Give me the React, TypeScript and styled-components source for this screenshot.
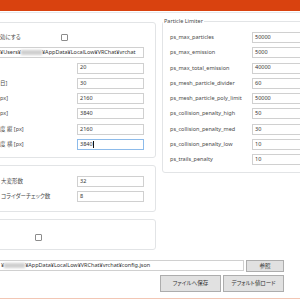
import React from "react";
import styled, { createGlobalStyle } from "styled-components";

const GlobalStyle = createGlobalStyle`
  html, body {
    margin: 0;
    padding: 0;
    background: #ffffff;
  }
  body {
    font-family: "Noto Sans", "Noto Sans CJK JP", sans-serif;
  }
`;

const Window = styled.div`
  width: 300px;
  height: 300px;
  overflow: hidden;
  display: flex;
  flex-direction: column;
  background: #ffffff;
  color: #444444;
  font-size: 5.5px;
  line-height: 1;
  font-feature-settings: "palt";
`;

const TitleBar = styled.div`
  height: 11px;
  flex-shrink: 0;
  background: #d9420f;
`;

const TabRule = styled.div`
  height: 1px;
  flex-shrink: 0;
  margin-top: 1px;
  background: #e6e9ec;
`;

const Main = styled.div`
  display: flex;
  align-items: flex-start;
`;

const LeftColumn = styled.div`
  display: flex;
  flex-direction: column;
  gap: 7px;
  width: 166px;
  flex-shrink: 0;
  margin-left: -10px;
  margin-top: 9px;
`;

const Panel = styled.div<{ $pad: string }>`
  display: flex;
  flex-direction: column;
  gap: 4.3px;
  box-sizing: border-box;
  padding: ${(p) => p.$pad};
  border: 1px solid #e2e4e6;
  border-radius: 3px;
`;

const Row = styled.div`
  display: flex;
  align-items: center;
  justify-content: space-between;
  height: 11px;
`;

const Label = styled.span`
  line-height: 11px;
  white-space: nowrap;
  color: #4a4a4a;
`;

const Field = styled.div<{ $focused?: boolean; $width?: number }>`
  box-sizing: border-box;
  display: flex;
  align-items: center;
  flex-shrink: 0;
  width: ${(p) => (p.$width ? `${p.$width}px` : "auto")};
  height: 11px;
  padding: 0 2px;
  background: #ffffff;
  border: 1px solid ${(p) => (p.$focused ? "#8dbbea" : "#d0d0d0")};
  color: #333333;
  white-space: nowrap;
  overflow: hidden;
`;

const PathField = styled(Field)`
  flex: 1;
  margin-left: -9px;
  padding-left: 8px;
`;

const Caret = styled.span`
  display: inline-block;
  width: 1px;
  height: 7px;
  margin-left: 0.5px;
  background: #111111;
`;

const Blur = styled.span`
  display: inline-block;
  width: 21px;
  height: 5px;
  background: #cfcfcf;
  filter: blur(1px);
`;

const CheckBox = styled.span<{ $offset: number }>`
  display: inline-block;
  box-sizing: border-box;
  width: 7px;
  height: 7px;
  margin-left: ${(p) => p.$offset}px;
  border: 1px solid #8c8c8c;
  border-radius: 1px;
  background: #ffffff;
`;

const CheckRow = styled.div`
  display: flex;
  align-items: center;
  height: 11px;
`;

const LimiterPanel = styled.div`
  position: relative;
  box-sizing: border-box;
  width: 160px;
  flex-shrink: 0;
  margin-left: 6px;
  margin-top: 8px;
  padding: 10px 0 7px 7px;
  border: 1px solid #e2e4e6;
  border-radius: 3px;
  display: grid;
  grid-template-columns: 82px 60px;
  row-gap: 4.3px;
`;

const Legend = styled.span`
  position: absolute;
  top: -4px;
  left: 0;
  padding: 0 1px;
  line-height: 7px;
  background: #ffffff;
  color: #4a4a4a;
`;

const BottomArea = styled.div`
  display: flex;
  flex-direction: column;
  gap: 3px;
  margin-top: 10px;
  margin-left: -10px;
  padding-right: 16px;
`;

const PathRow = styled.div`
  display: flex;
  align-items: flex-start;
  gap: 2px;
`;

const ConfigField = styled(Field)`
  flex: 1;
  padding-left: 10px;
`;

const Button = styled.button<{ $width: number; $height: number }>`
  box-sizing: border-box;
  width: ${(p) => p.$width}px;
  height: ${(p) => p.$height}px;
  padding: 0;
  background: #e1e1e1;
  border: 1px solid #adadad;
  color: #333333;
  font-family: inherit;
  font-size: 5.5px;
  font-feature-settings: "palt";
  line-height: 1;
`;

const ButtonRow = styled.div`
  display: flex;
  justify-content: flex-end;
  gap: 2px;
`;

const BottomEdge = styled.div`
  height: 1px;
  flex-shrink: 0;
  margin-top: auto;
  margin-bottom: 1px;
  background: #f2c6b4;
`;

const displayRows: { label: string; value: string; focused?: boolean }[] = [
  { label: "", value: "20" },
  { label: "日]", value: "30" },
  { label: "px]", value: "2160" },
  { label: "px]", value: "3840" },
  { label: "度 縦 [px]", value: "2160" },
  { label: "度 横 [px]", value: "3840", focused: true },
];

const limiterRows: [string, string][] = [
  ["ps_max_particles", "50000"],
  ["ps_max_emission", "5000"],
  ["ps_max_total_emission", "40000"],
  ["ps_mesh_particle_divider", "60"],
  ["ps_mesh_particle_poly_limit", "50000"],
  ["ps_collision_penalty_high", "50"],
  ["ps_collision_penalty_med", "30"],
  ["ps_collision_penalty_low", "10"],
  ["ps_trails_penalty", "10"],
];

export default function App() {
  return (
    <Window>
      <GlobalStyle />
      <TitleBar />
      <TabRule />
      <Main>
        <LeftColumn>
          <Panel $pad="9px 11px 7px 9px">
            <CheckRow>
              <Label>効にする</Label>
              <CheckBox $offset={40} />
            </CheckRow>
            <Row>
              <PathField>
                ¥Users¥
                <Blur />
                ¥AppData¥LocalLow¥VRChat¥vrchat
              </PathField>
            </Row>
            {displayRows.map((r, i) => (
              <Row key={i}>
                <Label>{r.label}</Label>
                <Field $width={67} $focused={r.focused}>
                  {r.value}
                  {r.focused && <Caret />}
                </Field>
              </Row>
            ))}
          </Panel>

          <Panel $pad="10px 11px 9px 10px">
            <Row>
              <Label>大変形数</Label>
              <Field $width={67}>32</Field>
            </Row>
            <Row>
              <Label>コライダーチェック数</Label>
              <Field $width={67}>8</Field>
            </Row>
          </Panel>

          <Panel $pad="12px 11px 6px 9px">
            <CheckRow>
              <CheckBox $offset={35} />
            </CheckRow>
          </Panel>
        </LeftColumn>

        <LimiterPanel>
          <Legend>Particle Limiter</Legend>
          {limiterRows.map(([name, value]) => (
            <React.Fragment key={name}>
              <Label>{name}</Label>
              <Field>{value}</Field>
            </React.Fragment>
          ))}
        </LimiterPanel>
      </Main>

      <BottomArea>
        <PathRow>
          <ConfigField>
            ¥
            <Blur />
            ¥AppData¥LocalLow¥VRChat¥vrchat¥config.json
          </ConfigField>
          <Button $width={38} $height={12}>参照</Button>
        </PathRow>
        <ButtonRow>
          <Button $width={61} $height={17}>ファイルへ保存</Button>
          <Button $width={61} $height={17}>デフォルト値ロード</Button>
        </ButtonRow>
      </BottomArea>

      <BottomEdge />
    </Window>
  );
}
